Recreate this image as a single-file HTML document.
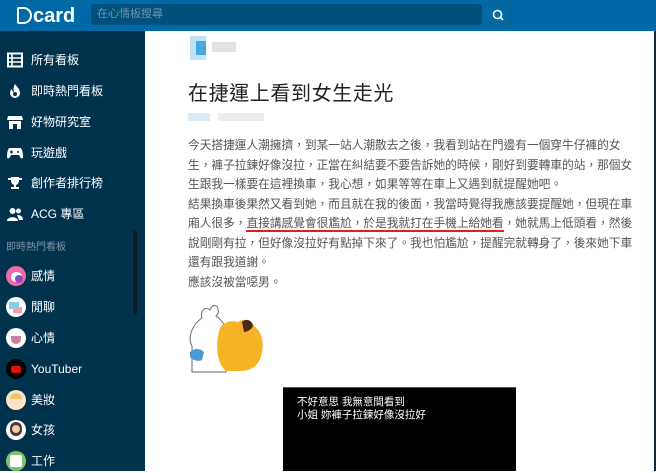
<!DOCTYPE html>
<html><head><meta charset="utf-8"><style>
*{margin:0;padding:0;box-sizing:border-box}
body{width:656px;height:471px;overflow:hidden;background:#fff;font-family:"Liberation Sans","Noto Sans CJK TC",sans-serif;position:relative}
.top{position:absolute;left:0;top:0;width:656px;height:31px;background:#006aa6}
.logo{position:absolute;left:17px;top:5px;color:#fff;font-size:20px;font-weight:bold;letter-spacing:0}
.search{position:absolute;left:91px;top:4px;width:391px;height:21px;background:#00507d;border-radius:3px;color:#6d93ad;font-size:11px;line-height:21px;padding-left:6px}
.sbtn{position:absolute;left:484px;top:4px;width:27px;height:21px;background:#006aa6;border:1px solid #0f5f8c;border-radius:2px}
.side{position:absolute;left:0;top:31px;width:145px;height:440px;background:#00324e}
.it{position:absolute;left:0;height:24px;width:145px;color:#fff;font-size:12px;line-height:24px}
.it span{position:absolute;left:31px}
.ic{position:absolute;left:7px;top:4px;width:16px;height:16px}
.av{position:absolute;left:6px;top:2px;width:20px;height:20px;border-radius:50%}
.lab{position:absolute;left:6px;top:207px;color:#7d93a3;font-size:10px}
.sc{position:absolute;left:133px;top:199px;width:4px;height:85px;background:#0d1c27;border-radius:2px}
.main{position:absolute;left:145px;top:31px;width:509px;height:440px;background:#fff}
.redge{position:absolute;left:654px;top:31px;width:2px;height:440px;background:#0d2d44}
.title{position:absolute;left:188px;top:77px;font-size:20px;color:#222;letter-spacing:0.6px}
.body{position:absolute;left:188px;top:136px;width:424px;font-size:11.7px;color:#555;}
.body div{height:19.5px;line-height:19.5px;text-align:justify;text-align-last:justify;white-space:nowrap;overflow:visible}
.body div.nl{text-align-last:left}
.u{border-bottom:2px solid #e02020}
.blk{position:absolute;left:283px;top:387px;width:233px;height:84px;background:#000;color:#fff;font-size:10.5px;line-height:13px;padding:8px 14px;border-top:1px solid #555}
</style></head><body>
<div class="top">
 <div class="logo"><span style="display:inline-block;width:15px;height:17px;border:2.5px solid #fff;border-radius:2px 9px 9px 2px;vertical-align:-2px;margin-right:1px"></span>card</div>
 <div class="search">在心情板搜尋</div>
 <div class="sbtn"><svg width="27" height="21" viewBox="0 0 27 21"><circle cx="12.5" cy="9.5" r="4" fill="none" stroke="#fff" stroke-width="1.6"/><line x1="15.5" y1="12.5" x2="18" y2="15" stroke="#fff" stroke-width="1.6"/></svg></div>
</div>
<div class="side">
 <div class="it" style="top:17px"><svg class="ic" viewBox="0 0 16 16"><rect x="1" y="1.5" width="14" height="13" fill="none" stroke="#fff" stroke-width="2"/><path d="M1 6h14M1 10h14M5 2v12" stroke="#fff" stroke-width="1.6"/></svg><span>所有看板</span></div>
 <div class="it" style="top:48px"><svg class="ic" viewBox="0 0 16 16"><path d="M8 1c2 3 5 5 5 9a5 5 0 0 1-10 0c0-2 1-3 2-4 0 2 1 3 2 3-1-3 0-6 1-8z" fill="#fff"/><circle cx="8" cy="11" r="2" fill="#00324e"/></svg><span>即時熱門看板</span></div>
 <div class="it" style="top:79px"><svg class="ic" viewBox="0 0 16 16"><path d="M1 2h14l1 4H0z" fill="#fff"/><rect x="2" y="7" width="12" height="8" fill="#fff"/><rect x="6" y="10" width="4" height="5" fill="#00324e"/></svg><span>好物研究室</span></div>
 <div class="it" style="top:110px"><svg class="ic" viewBox="0 0 16 16"><path d="M3 3h10c2 0 3 4 3 9 0 2-2 2-3 0l-1-2H4l-1 2c-1 2-3 2-3 0 0-5 1-9 3-9z" fill="#fff"/><path d="M3 7h3M4.5 5.5v3" stroke="#00324e" stroke-width="1.2"/><circle cx="11" cy="7" r="1" fill="#00324e"/></svg><span>玩遊戲</span></div>
 <div class="it" style="top:140px"><svg class="ic" viewBox="0 0 16 16"><path d="M4 2h8v4a4 4 0 0 1-8 0z M1 3h3v2H1zM12 3h3v2h-3zM7 9h2v3H7zM4 12h8v2H4z" fill="#fff"/></svg><span>創作者排行榜</span></div>
 <div class="it" style="top:171px"><svg class="ic" viewBox="0 0 16 16"><circle cx="5.5" cy="5" r="3" fill="#fff"/><circle cx="11.5" cy="5" r="2.5" fill="#fff"/><path d="M0 15c0-5 11-5 11 0z M10 9c3 0 6 1 6 5h-4z" fill="#fff"/></svg><span>ACG 專區</span></div>
 <div class="lab">即時熱門看板</div>
 <div class="sc"></div>
 <div class="it" style="top:233px"><div class="av" style="background:#f06aa8"></div><div style="position:absolute;left:11px;top:8px;width:11px;height:10px;background:#fff;border-radius:5px"></div><div style="position:absolute;left:15px;top:11px;width:8px;height:8px;background:#8a4fc0;border-radius:4px"></div><span>感情</span></div>
 <div class="it" style="top:264px"><div class="av" style="background:#fff"></div><div style="position:absolute;left:9px;top:7px;width:10px;height:7px;background:#7fd3e8"></div><div style="position:absolute;left:13px;top:12px;width:9px;height:6px;background:#f3a2a8"></div><span>閒聊</span></div>
 <div class="it" style="top:295px"><div class="av" style="background:#fff"></div><div style="position:absolute;left:11px;top:10px;width:10px;height:8px;background:#c97fa0;border-radius:0 0 5px 5px"></div><span>心情</span></div>
 <div class="it" style="top:326px"><div class="av" style="background:#000"></div><div style="position:absolute;left:11px;top:9px;width:10px;height:7px;background:#e01010;border-radius:2px"></div><span>YouTuber</span></div>
 <div class="it" style="top:357px"><div class="av" style="background:#fbe4c8"></div><div style="position:absolute;left:10px;top:5px;width:12px;height:6px;background:#f2c46e;border-radius:6px 6px 0 0"></div><span>美妝</span></div>
 <div class="it" style="top:387px"><div class="av" style="background:#fff"></div><div style="position:absolute;left:10px;top:4px;width:12px;height:14px;background:#4a3a36;border-radius:6px"></div><div style="position:absolute;left:12px;top:7px;width:8px;height:8px;background:#f3c9a8;border-radius:4px"></div><span>女孩</span></div>
 <div class="it" style="top:418px"><div class="av" style="background:#7cc36a"></div><div style="position:absolute;left:10px;top:6px;width:12px;height:12px;background:#fff;border-radius:2px"></div><span>工作</span></div>
</div>
<div class="main"></div>
<div class="redge"></div>
<div style="position:absolute;left:190px;top:36px;width:16px;height:24px;background:#bfe2f7"></div>
<div style="position:absolute;left:196px;top:41px;width:10px;height:14px;background:#4aa9dc"></div>
<div style="position:absolute;left:212px;top:42px;width:24px;height:10px;background:#e2e2e2"></div>
<div class="title">在捷運上看到女生走光</div>
<div style="position:absolute;left:188px;top:113px;width:22px;height:8px;background:#d9eaf5"></div>
<div style="position:absolute;left:218px;top:113px;width:46px;height:8px;background:#ececec"></div>
<div class="body">
<div>今天搭捷運人潮擁擠，到某一站人潮散去之後，我看到站在門邊有一個穿牛仔褲的女</div>
<div>生，褲子拉鍊好像沒拉，正當在糾結要不要告訴她的時候，剛好到要轉車的站，那個女</div>
<div class="nl">生跟我一樣要在這裡換車，我心想，如果等等在車上又遇到就提醒她吧。</div>
<div>結果換車後果然又看到她，而且就在我的後面，我當時覺得我應該要提醒她，但現在車</div>
<div>廂人很多，<span class="u">直接講感覺會很尷尬，於是我就打在手機上給她看</span>，她就馬上低頭看，然後</div>
<div>說剛剛有拉，但好像沒拉好有點掉下來了。我也怕尷尬，提醒完就轉身了，後來她下車</div>
<div class="nl">還有跟我道謝。</div>
<div class="nl">應該沒被當噁男。</div>
</div>
<svg style="position:absolute;left:186px;top:302px" width="80" height="72" viewBox="0 0 80 72">
<path d="M16 16c-2-8 4-12 8-8 2-6 8-6 8 0 1 2 0 4-2 6 6 4 10 10 10 18v38H6V44c-4-6-2-20 10-28z" fill="#fff" stroke="#666" stroke-width="1"/>
<path d="M4 50c4-4 10-4 14 0l-2 8c-4 2-10 0-12-3z" fill="#4a9ad8"/>
<path d="M34 26c4-6 10-8 18-6 6-4 14-2 16 4 8 6 10 16 8 26-2 12-8 18-20 19H40c-8-6-12-24-6-43z" fill="#f5b423"/>
<path d="M56 20c4-4 10-2 11 4-2 4-6 6-9 6z" fill="#4a2a18"/>
</svg>
<div class="blk">不好意思 我無意間看到<br>小姐 妳褲子拉鍊好像沒拉好</div>
</body></html>
